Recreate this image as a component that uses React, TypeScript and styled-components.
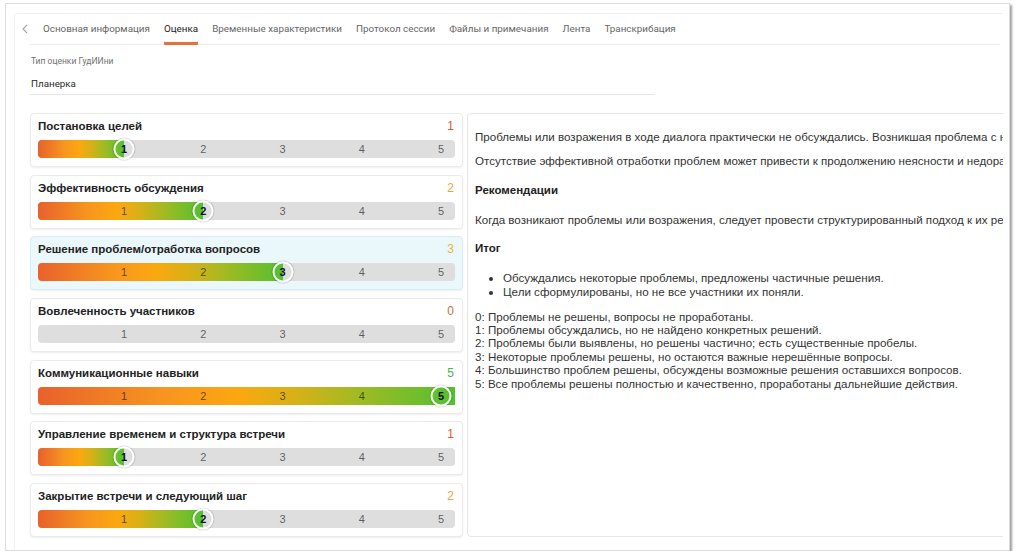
import React from 'react';
import styled, { createGlobalStyle, css } from 'styled-components';

const Global = createGlobalStyle`
  html, body { margin: 0; padding: 0; background: #fff; }
  body { font-family: "Liberation Sans", Arial, sans-serif; color: #333; }
  * { box-sizing: border-box; }
`;

const Frame = styled.div`
  margin: 3px 0 0 5px;
  width: 1005px;
  height: 548px;
  border: 1px solid #dcdcdc;
  box-shadow: 2px 2px 2px rgba(0, 0, 0, 0.38);
  background: #fff;
  overflow: hidden;
`;

const Inner = styled.div`
  margin: 9px 6px 0 8px;
  height: 540px;
  border-top: 1px solid #eeeeee;
  border-left: 1px solid #f2f2f2;
  border-top-left-radius: 4px;
  overflow: hidden;
`;

const TabRow = styled.div`
  display: flex;
  align-items: stretch;
  padding-left: 7px;
`;

const Back = styled.div`
  width: 8px;
  height: 30px;
  display: flex;
  align-items: center;
  color: #a8a8a8;
`;

const TabList = styled.div`
  flex: 1;
  display: flex;
  gap: 14px;
  padding-left: 13px;
  margin-right: 3px;
  height: 31px;
  border-bottom: 1px solid #ececec;
  font-family: Roboto, "Liberation Sans", sans-serif;
  font-size: 9.85px;
`;

const Tab = styled.div<{ $active?: boolean }>`
  height: 31px;
  margin-bottom: -1px;
  padding-top: 7px;
  line-height: 15px;
  white-space: nowrap;
  color: ${(p) => (p.$active ? '#222' : '#666')};
  ${(p) =>
    p.$active &&
    css`
      box-shadow: inset 0 -3px 0 #e8703a;
      border-radius: 0 0 1px 1px;
    `}
`;

const Body = styled.div`
  padding-left: 15px;
`;

const Field = styled.div`
  width: 625px;
  margin-top: 11px;
  border-bottom: 1px solid #e6e6e6;
  padding-bottom: 3px;
  font-family: Roboto, "Liberation Sans", sans-serif;
`;

const FieldLabel = styled.div`
  font-size: 8.5px;
  line-height: 11px;
  color: #707070;
  padding-left: 1px;
`;

const FieldValue = styled.div`
  margin-top: 10px;
  font-size: 9.8px;
  line-height: 14px;
  color: #2a2a2a;
  padding-left: 1px;
`;

const Columns = styled.div`
  display: grid;
  grid-template-columns: 433px 580px;
  gap: 4px;
  margin-top: 18px;
  align-items: stretch;
`;

const CardList = styled.div`
  display: flex;
  flex-direction: column;
  gap: 7.7px;
`;

const Card = styled.div<{ $active?: boolean }>`
  border: 1px solid ${(p) => (p.$active ? '#d6eef6' : '#ebebeb')};
  background: ${(p) => (p.$active ? '#eaf7fb' : '#fff')};
  border-radius: 4px;
  box-shadow: 0 1px 2px rgba(0, 0, 0, 0.07);
  padding: 5px 7px 8px;
`;

const CardHead = styled.div`
  display: flex;
  justify-content: space-between;
  align-items: center;
  height: 14px;
  margin-bottom: 7px;
`;

const CardTitle = styled.div`
  font-size: 11.5px;
  font-weight: bold;
  color: #222;
  line-height: 14px;
`;

const Score = styled.div<{ $color: string }>`
  font-size: 12px;
  line-height: 14px;
  color: ${(p) => p.$color};
  padding-right: 1px;
`;

const Bar = styled.div`
  position: relative;
  height: 18px;
  border-radius: 4px;
  background: #dedede;
`;

const Fill = styled.div`
  height: 100%;
  border-radius: 4px 0 0 4px;
  background: linear-gradient(
    to right,
    #e8612c 0%,
    #f7951f 30%,
    #fca710 48%,
    #d6b117 62%,
    #9cbb24 78%,
    #52c031 100%
  );
`;

const Mark = styled.div<{ $pos: number; $current?: boolean }>`
  position: absolute;
  top: 50%;
  left: calc(6.75px + (100% - 20.75px) * ${(p) => p.$pos} / 5);
  transform: translate(-50%, -50%);
  display: flex;
  align-items: center;
  justify-content: center;
  font-size: 11px;
  line-height: 1;
  color: rgba(0, 0, 0, 0.6);
  ${(p) =>
    p.$current &&
    css`
      width: 21px;
      height: 21px;
      border-radius: 50%;
      border: 2px solid rgba(255, 255, 255, 0.92);
      box-shadow: 0 0 0 1px rgba(0, 0, 0, 0.12);
      color: #111;
      font-weight: bold;
    `}
`;

const Panel = styled.div`
  border: 1px solid #e6e6e6;
  border-radius: 4px;
  padding: 16px 7px 0;
  font-size: 11.6px;
  line-height: 13.5px;
  color: #333;
  white-space: nowrap;
  overflow: hidden;
`;

const Para = styled.p`
  margin: 0 0 10.5px;
`;

const Heading = styled.h4`
  margin: 16px 0 15.5px;
  font-size: 11.5px;
  font-weight: bold;
  color: #222;
`;

const Bullets = styled.ul`
  margin: 0 0 10.5px;
  padding-left: 28px;
  line-height: 14px;
`;

const Scale = styled.div`
  line-height: 13.4px;
`;

const tabs = [
  'Основная информация',
  'Оценка',
  'Временные характеристики',
  'Протокол сессии',
  'Файлы и примечания',
  'Лента',
  'Транскрибация',
];

const criteria = [
  { title: 'Постановка целей', value: 1 },
  { title: 'Эффективность обсуждения', value: 2 },
  { title: 'Решение проблем/отработка вопросов', value: 3, active: true },
  { title: 'Вовлеченность участников', value: 0 },
  { title: 'Коммуникационные навыки', value: 5 },
  { title: 'Управление временем и структура встречи', value: 1 },
  { title: 'Закрытие встречи и следующий шаг', value: 2 },
];

const scoreColors: Record<number, string> = {
  0: '#c8703c',
  1: '#e2572b',
  2: '#f0a43a',
  3: '#eeb23c',
  4: '#9bbb2a',
  5: '#4caf50',
};

const scale = [
  '0: Проблемы не решены, вопросы не проработаны.',
  '1: Проблемы обсуждались, но не найдено конкретных решений.',
  '2: Проблемы были выявлены, но решены частично; есть существенные пробелы.',
  '3: Некоторые проблемы решены, но остаются важные нерешённые вопросы.',
  '4: Большинство проблем решены, обсуждены возможные решения оставшихся вопросов.',
  '5: Все проблемы решены полностью и качественно, проработаны дальнейшие действия.',
];

function fillWidth(v: number): string {
  if (v <= 0) return '0px';
  if (v >= 5) return '100%';
  return `calc(6.75px + (100% - 20.75px) * ${v} / 5)`;
}

const Slider: React.FC<{ value: number }> = ({ value }) => (
  <Bar>
    <Fill style={{ width: fillWidth(value) }} />
    {[1, 2, 3, 4, 5].map((n) => (
      <Mark key={n} $pos={n} $current={n === value}>
        {n}
      </Mark>
    ))}
  </Bar>
);

export default function App() {
  return (
    <>
      <Global />
      <Frame>
        <Inner>
          <TabRow>
            <Back>
              <svg width="6" height="10" viewBox="0 0 6 10">
                <path d="M5 1 L1 5 L5 9" fill="none" stroke="#a8a8a8" strokeWidth="1.1" />
              </svg>
            </Back>
            <TabList>
              {tabs.map((t) => (
                <Tab key={t} $active={t === 'Оценка'}>
                  {t}
                </Tab>
              ))}
            </TabList>
          </TabRow>
          <Body>
            <Field>
              <FieldLabel>Тип оценки ГудИИни</FieldLabel>
              <FieldValue>Планерка</FieldValue>
            </Field>
            <Columns>
              <CardList>
                {criteria.map((c) => (
                  <Card key={c.title} $active={c.active}>
                    <CardHead>
                      <CardTitle>{c.title}</CardTitle>
                      <Score $color={scoreColors[c.value]}>{c.value}</Score>
                    </CardHead>
                    <Slider value={c.value} />
                  </Card>
                ))}
              </CardList>
              <Panel>
                <Para>
                  Проблемы или возражения в ходе диалога практически не обсуждались. Возникшая проблема с недопониманием задач не была проработана до конца.
                </Para>
                <Para>
                  Отсутствие эффективной отработки проблем может привести к продолжению неясности и недоразумений в дальнейшей работе команды.
                </Para>
                <Heading>Рекомендации</Heading>
                <Para>
                  Когда возникают проблемы или возражения, следует провести структурированный подход к их решению, уточнив детали и договорившись о шагах.
                </Para>
                <Heading>Итог</Heading>
                <Bullets>
                  <li>Обсуждались некоторые проблемы, предложены частичные решения.</li>
                  <li>Цели сформулированы, но не все участники их поняли.</li>
                </Bullets>
                <Scale>
                  {scale.map((s) => (
                    <div key={s}>{s}</div>
                  ))}
                </Scale>
              </Panel>
            </Columns>
          </Body>
        </Inner>
      </Frame>
    </>
  );
}
